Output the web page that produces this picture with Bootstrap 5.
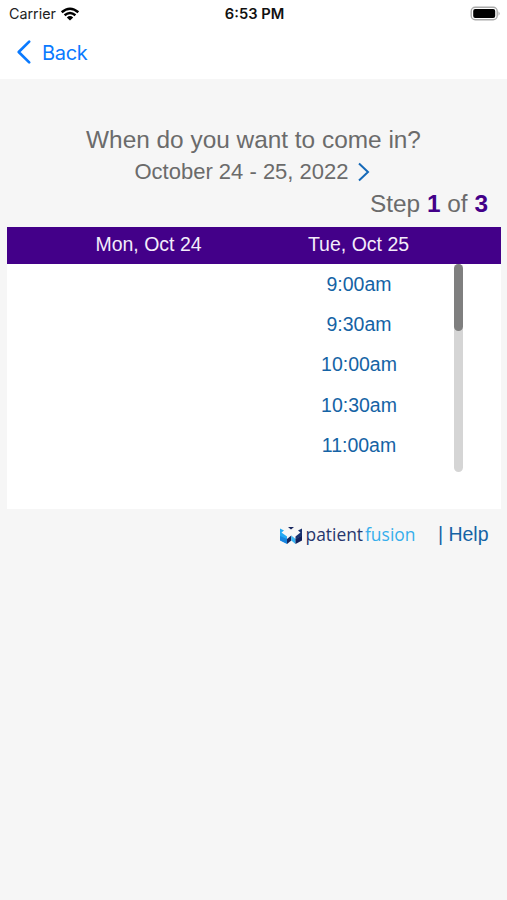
<!DOCTYPE html>
<html lang="en">
<head>
<meta charset="utf-8">
<meta name="viewport" content="width=device-width, initial-scale=1">
<title>Schedule appointment</title>
<link href="https://cdn.jsdelivr.net/npm/bootstrap@5.3.0/dist/css/bootstrap.min.css" rel="stylesheet">
<style>
body{background:#f6f6f6;font-family:"Liberation Sans",Arial,sans-serif;color:#6b6b6b;min-height:900px;overflow:hidden}
svg{display:block;flex:none}
.ios{font-family:Inter,"Liberation Sans",sans-serif;background:#fff;height:79px}
.status{height:27px;padding:0 7px 0 9px;font-size:14.3px;color:#222}
.status>*{flex:1 1 0}
.clock{font-weight:600;font-size:14.7px;color:#111;padding-top:1px}
.back{height:50px;padding-left:16px;font-size:20px;letter-spacing:-.3px;color:#0a7aff;gap:10px}
.back span{padding-top:1px}
.question{font-size:24.4px;line-height:32px;padding-top:45px}
.range{font-size:22px;line-height:32px;gap:9px;padding-right:3px}
.step{font-size:24.4px;line-height:32px;padding-right:19px}
.step b{color:#430089}
.panel{margin:7px 6px 0 7px;background:#fff;height:282px}
.days{background:#430089;height:37px;color:#f3ecfa;font-size:19.5px;padding:0 0 1px 36.5px}
.slots{height:208px}
.slot{color:#1563a5;font-size:19.5px;height:40.3px;padding-top:.6px;text-decoration:none}
.times{width:207px;margin-left:248.5px}
.day{width:210px;flex:none}
.track{width:9px;background:#d5d5d5;border-radius:5px;margin-left:-8.5px}
.thumb{height:67px;background:#7f7f7f;border-radius:5px}
.foot{padding:13px 18.5px 0 0;color:#1563a5;font-size:19.5px;gap:16px;height:38px}
</style>
</head>
<body>
<header class="ios">
  <div class="status d-flex align-items-center">
    <div class="d-flex align-items-center gap-1"><span>Carrier</span>
      <svg width="20" height="14" viewBox="0 0 20 14" fill="none" stroke="#000" stroke-width="2.5"><path d="M1.7 5.3Q10-1.8 18.3 5.3M4.6 8.3Q10 3.8 15.4 8.3"/><path d="M6.8 10.4Q10 7.6 13.2 10.4L10 13.6Z" fill="#000" stroke="none"/></svg>
    </div>
    <div class="clock text-center">6:53 PM</div>
    <div class="d-flex justify-content-end">
      <svg width="30" height="15" viewBox="0 0 30 15"><rect x="1.2" y="1.2" width="26" height="12.6" rx="4" fill="#fff" stroke="#aaa" stroke-width="1.4"/><rect x="3.2" y="3.1" width="22" height="8.8" rx="2" fill="#000"/><path d="M28.5 5.2Q30.8 7.5 28.5 9.8Z" fill="#aaa"/></svg>
    </div>
  </div>
  <a class="back d-flex align-items-center text-decoration-none" href="#">
    <svg width="16" height="26" viewBox="0 0 16 26" fill="none" stroke="#0a7aff" stroke-width="2.7" stroke-linecap="round" stroke-linejoin="round"><path d="M13.2 2.6 2.7 13 13.2 23.4"/></svg>
    <span>Back</span>
  </a>
</header>
<main>
  <div class="question text-center">When do you want to come in?</div>
  <div class="range d-flex justify-content-center align-items-center"><span>October 24 - 25, 2022</span>
    <svg width="12" height="20" viewBox="0 0 12 20" fill="none" stroke="#1569b8" stroke-width="2"><path d="M1 1.5 10 10 1 18.5"/></svg>
  </div>
  <div class="step text-end">Step <b>1</b> of <b>3</b></div>
  <section class="panel">
    <div class="days d-flex align-items-center text-center"><div class="day">Mon, Oct 24</div><div class="day">Tue, Oct 25</div></div>
    <div class="slots d-flex">
      <div class="times d-flex flex-column">
        <a class="slot d-flex align-items-center justify-content-center" href="#">9:00am</a>
        <a class="slot d-flex align-items-center justify-content-center" href="#">9:30am</a>
        <a class="slot d-flex align-items-center justify-content-center" href="#">10:00am</a>
        <a class="slot d-flex align-items-center justify-content-center" href="#">10:30am</a>
        <a class="slot d-flex align-items-center justify-content-center" href="#">11:00am</a>
      </div>
      <div class="track"><div class="thumb"></div></div>
    </div>
  </section>
  <footer class="foot d-flex justify-content-end align-items-center">
    <svg width="144" height="34" viewBox="0 -4 144 34">
      <path d="M2 6.5 6 8.5 3.5 10.5 9 14.5V21.5L2 18Z" fill="#25a9f3"/>
      <path d="M2 14 9 17V22L2 18.5Z" fill="#1685df"/>
      <path d="M9 17 13.3 13.5V18.5L9 22Z" fill="#14245c"/>
      <path d="M13.3 13.5 17.5 17V22L13.3 18.5Z" fill="#35b5f5"/>
      <path d="M17.5 17 24 13.5V18.5L17.5 22Z" fill="#12205a"/>
      <path d="M24 6.5V14L17.5 17.5V14.5L22.5 10.5 20 8.5Z" fill="#19316f"/>
      <path d="M10 5H16L13 7.4Z" fill="#17265f"/>
      <g font-family="'Open Sans','Noto Sans',sans-serif" font-size="18.8"><text x="27.5" y="18.5" textLength="57.5" lengthAdjust="spacingAndGlyphs" fill="#26376d">patient</text><text x="87" y="18.5" textLength="50.5" lengthAdjust="spacingAndGlyphs" fill="#35aeec">fusion</text></g>
    </svg>
    <a class="text-decoration-none text-reset" href="#">| Help</a>
  </footer>
</main>
<script src="https://cdn.jsdelivr.net/npm/bootstrap@5.3.0/dist/js/bootstrap.bundle.min.js"></script>
</body>
</html>
